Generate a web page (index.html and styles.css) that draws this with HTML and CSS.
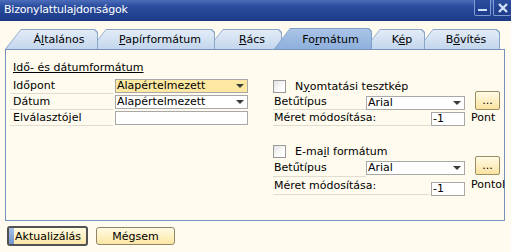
FILE: index.html
```html
<!DOCTYPE html>
<html lang="hu">
<head>
    <meta charset="UTF-8">
    <title>Bizonylattulajdonságok</title>
    <link rel="stylesheet" href="styles.css">
</head>
<body>
<div class="titlebar">
    <span class="title">Bizonylattulajdonságok</span>
    <div class="win-btns">
        <span class="win-btn">
            <svg width="9" height="9" viewBox="0 0 9 9"><rect x="0" y="6" width="9" height="2" fill="#cfe0fa"/></svg>
        </span>
        <span class="win-btn close">
            <svg width="10" height="10" viewBox="0 0 10 10"><path d="M1 1 L9 9 M9 1 L1 9" stroke="#cfe0fa" stroke-width="2.4"/></svg>
        </span>
    </div>
</div>

<div class="tabs">
    <div class="tab tab-1"><div class="tab-face">Á<u>l</u>talános</div></div>
    <div class="tab tab-2"><div class="tab-face"><u>P</u>apírformátum</div></div>
    <div class="tab tab-3"><div class="tab-face"><u>R</u>ács</div></div>
    <div class="tab tab-4 active"><div class="tab-face">Fo<u>r</u>mátum</div></div>
    <div class="tab tab-5"><div class="tab-face">K<u>é</u>p</div></div>
    <div class="tab tab-6"><div class="tab-face">B<u>ő</u>vítés</div></div>
</div>

<div class="panel">
    <div class="col-left">
        <div class="group-title">Idő- és dátumformátum</div>
        <div class="row">
            <span class="label">Időpont</span>
            <div class="field focus">Alapértelmezett<span class="arrow"></span></div>
        </div>
        <div class="row">
            <span class="label">Dátum</span>
            <div class="field">Alapértelmezett<span class="arrow"></span></div>
        </div>
        <div class="row">
            <span class="label">Elválasztójel</span>
            <div class="field"></div>
        </div>
    </div>

    <div class="col-right">
        <div class="group">
            <div class="check-row"><span class="checkbox"></span>N<u>y</u>omtatási tesztkép</div>
            <div class="row">
                <span class="label label-font">Betűtípus</span>
                <div class="field field-font">Arial<span class="arrow"></span></div>
                <button class="dots">...</button>
            </div>
            <div class="row">
                <span class="label label-size">Méret módosítása:</span>
                <div class="field field-size">-1</div>
                <span class="unit">Pont</span>
            </div>
        </div>
        <div class="group loose">
            <div class="check-row"><span class="checkbox"></span>E-ma<u>i</u>l formátum</div>
            <div class="row">
                <span class="label label-font">Betűtípus</span>
                <div class="field field-font">Arial<span class="arrow"></span></div>
                <button class="dots">...</button>
            </div>
            <div class="row">
                <span class="label label-size">Méret módosítása:</span>
                <div class="field field-size">-1</div>
                <span class="unit">Pontol</span>
            </div>
        </div>
    </div>
</div>

<div class="actions">
    <button class="btn default"><span class="focus-mark"></span>Aktualizálás</button>
    <button class="btn">Mégsem</button>
</div>
</body>
</html>
```

FILE: styles.css
```css
*{
    margin: 0;
    padding: 0;
    box-sizing: border-box;
}
body{
    width: 511px;
    height: 252px;
    overflow: hidden;
    background: #fffbee;
    font-family: "DejaVu Sans", Verdana, sans-serif;
    font-size: 11px;
    color: #000;
}

/* title bar */
.titlebar{
    height: 21px;
    display: flex;
    justify-content: space-between;
    background: linear-gradient(#4b6dba, #2b4d9f 30%, #21418f 75%, #1b3986);
    color: #fff;
}
.title{
    padding: 2px 0 0 4px;
    line-height: 16px;
    letter-spacing: -0.2px;
}
.win-btns{
    display: flex;
    gap: 2px;
    align-items: flex-start;
}
.win-btn{
    width: 17px;
    height: 16px;
    border: 1px solid #7f9bd2;
    border-top: none;
    border-radius: 0 0 2px 2px;
    background: linear-gradient(#2c4d9e, #1e3c8a);
    display: flex;
    align-items: center;
    justify-content: center;
}
.win-btn.close{
    width: 18px;
    border-right: none;
}

/* tabs */
.tabs{
    display: flex;
    height: 21px;
    margin-top: 7px;
    padding-left: 5px;
}
.tab{
    position: relative;
    height: 20px;
    margin-top: 1px;
    margin-left: -8px;
    padding: 1px 1px 0 1px;
    background: #89a5cb;
    clip-path: polygon(0 100%, 16px 0, calc(100% - 3px) 0, 100% 3px, 100% 100%);
}
.tab-face{
    height: 100%;
    padding: 2px 0 0 15px;
    line-height: 15px;
    text-align: center;
    background: linear-gradient(#e3ecf8, #c3d6ed);
    clip-path: polygon(0 100%, 15px 0, calc(100% - 3px) 0, 100% 3px, 100% 100%);
}
.tab.active{
    height: 21px;
    margin-top: 0;
    z-index: 10;
    background: #7f9ecb;
}
.tab.active .tab-face{
    padding-top: 3px;
    background: linear-gradient(#aac4e6, #8eb0dc);
}
.tab-1{ width: 93px; margin-left: 0; z-index: 6; }
.tab-2{ width: 125px; z-index: 5; }
.tab-3{ width: 75px; z-index: 4; }
.tab-4{ width: 98px; }
.tab-5{ width: 61px; z-index: 2; }
.tab-6{ width: 83px; z-index: 1; }

/* panel */
.panel{
    width: 500px;
    height: 172px;
    margin-left: 5px;
    border: 1px solid #7593bd;
    display: flex;
    padding: 10px 0 0 4px;
}
.col-left{
    width: 238px;
}
.group-title{
    height: 16px;
    line-height: 16px;
    padding-left: 3px;
    margin-bottom: 2px;
    text-decoration: underline;
}
.row{
    display: flex;
    align-items: flex-start;
    height: 16px;
}
.label{
    width: 103px;
    height: 16px;
    line-height: 15px;
    padding-left: 3px;
    border-bottom: 1px solid #e0dcd0;
}
.field{
    width: 133px;
    height: 14px;
    margin: 1px 0 0 2px;
    padding-left: 1px;
    border: 1px solid #a8a8a8;
    background: #fff;
    line-height: 12px;
    display: flex;
    align-items: center;
    justify-content: space-between;
}
.field.focus{
    background: #fde8a2;
}
.arrow{
    width: 0;
    height: 0;
    margin-right: 3px;
    border-left: 4px solid transparent;
    border-right: 4px solid transparent;
    border-top: 4px solid #3c3c3c;
}

.col-right{
    width: 232px;
    margin-left: 25px;
    padding-top: 18px;
}
.check-row{
    display: flex;
    align-items: center;
    height: 16px;
}
.checkbox{
    width: 13px;
    height: 13px;
    margin-right: 9px;
    border: 1px solid #9a9a9a;
    background: linear-gradient(135deg, #e2e2e2, #ffffff 70%);
}
.col-right .label{
    padding-left: 1px;
}
.label-font{
    width: 93px;
}
.field-font{
    width: 99px;
    margin: 2px 0 0 0;
}
.label-size{
    width: 157px;
}
.field-size{
    width: 34px;
    margin: 2px 0 0 1px;
}
.unit{
    margin-left: 6px;
    line-height: 16px;
}
.dots{
    width: 25px;
    height: 19px;
    margin: -3px 0 0 10px;
    border: 1px solid #9b8d62;
    border-radius: 2px;
    background: linear-gradient(#fffbe6, #fbe3a0);
    font: inherit;
    line-height: 12px;
}
.group.loose{
    margin-top: 17px;
}
.group.loose .row{
    height: 18px;
}
.group.loose .label{
    height: 18px;
    line-height: 17px;
}
.group.loose .field-font{
    margin-top: 2px;
}
.group.loose .field-size{
    margin-top: 5px;
}

/* bottom buttons */
.actions{
    display: flex;
    align-items: center;
    gap: 8px;
    padding: 5px 0 0 7px;
}
.btn{
    width: 79px;
    height: 18px;
    border: 1px solid #8f8566;
    border-radius: 3px;
    background: linear-gradient(#fffbe4, #fbe6a4);
    font: inherit;
    color: #000;
    display: flex;
    align-items: center;
    justify-content: center;
}
.btn.default{
    width: 81px;
    height: 20px;
    border: 2px solid #525252;
    justify-content: flex-start;
    overflow: hidden;
}
.focus-mark{
    width: 5px;
    height: 100%;
    margin-right: 1px;
    background: linear-gradient(#a8c2e8, #6f93cf);
}
```
